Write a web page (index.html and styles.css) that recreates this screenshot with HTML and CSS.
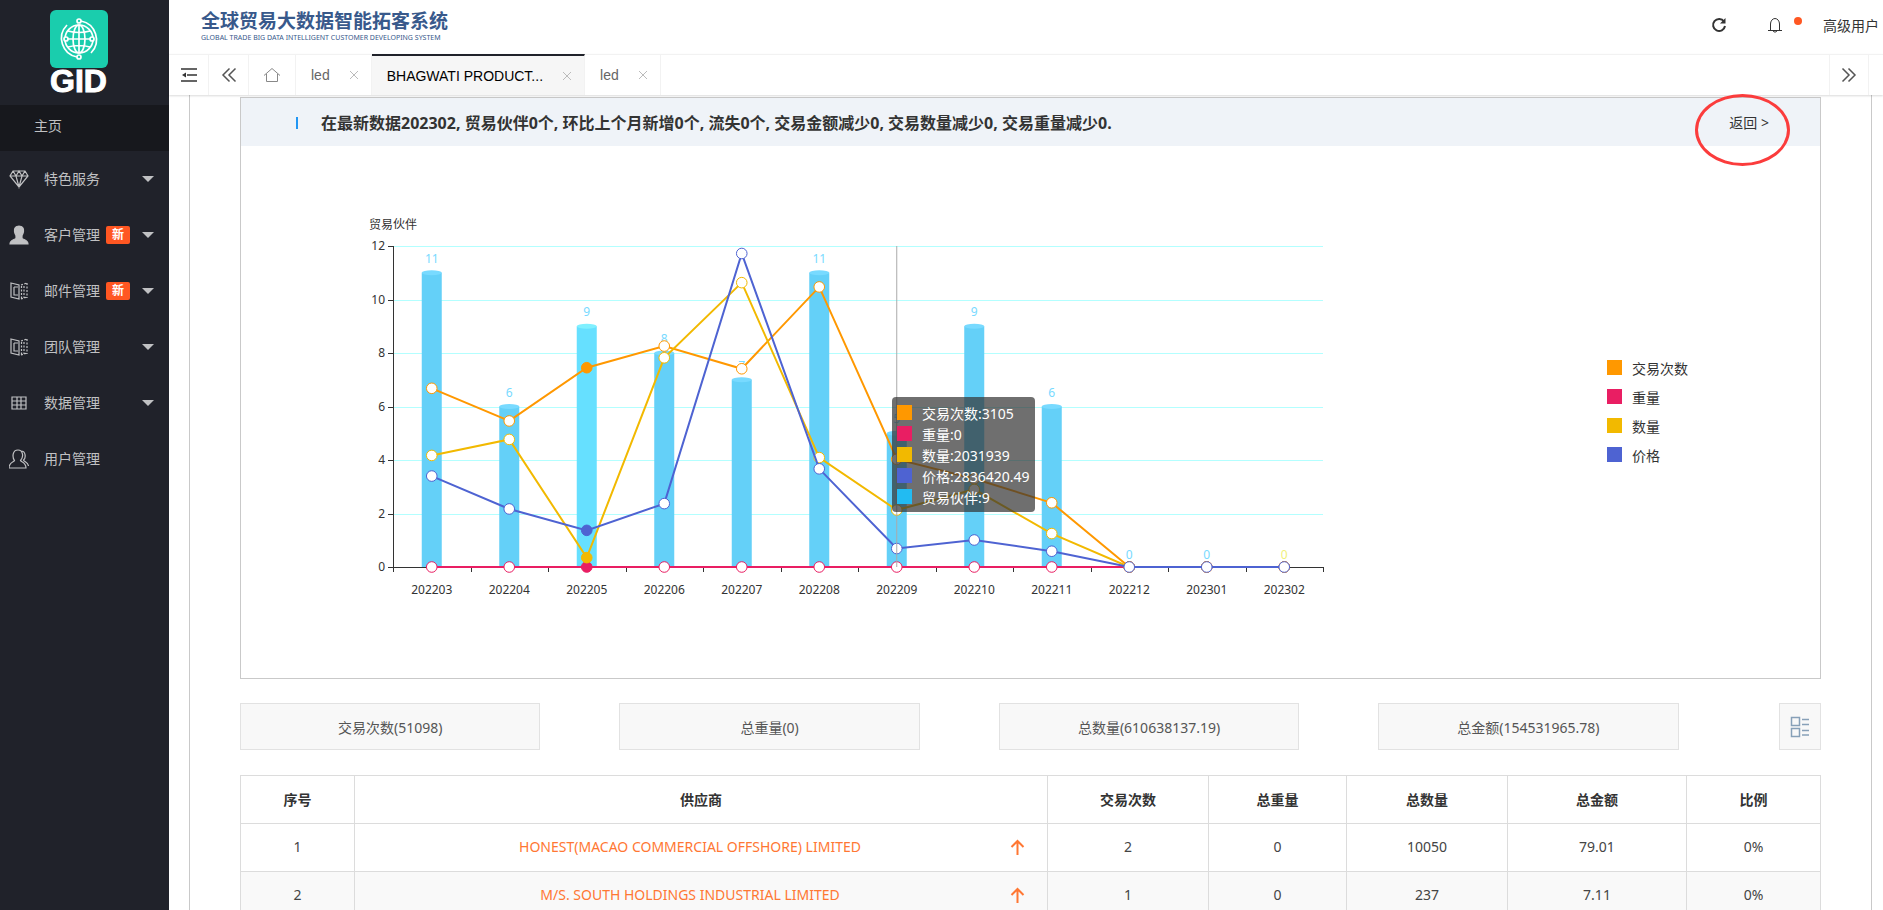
FILE: index.html
```
<!DOCTYPE html>
<html lang="zh-CN">
<head>
    <meta charset="UTF-8">
    <meta name="viewport" content="width=device-width, initial-scale=1.0">
    <title>全球贸易大数据智能拓客系统</title>
    <link rel="stylesheet" href="styles.css">
</head>
<body>
    <aside class="sidebar">
        <div class="logo">
            <svg class="logo-mark" viewBox="0 0 58 58" fill="none" stroke="#fff" stroke-width="1.700">
                <rect width="58" height="58" rx="6" fill="#1acdad" stroke="none"/>
                <circle cx="29" cy="29" r="14"/>
                <ellipse cx="29" cy="29" rx="6" ry="14"/>
                <path d="M29 15v28M15 29h28M18 21q11 3 22 0M18 37q11-3 22 0"/>
                <path d="M17 15a19 19 0 0 0 10 32M31 11a19 19 0 0 1 10 32"/>
                <g fill="#1acdad">
                    <circle cx="29" cy="11" r="2"/>
                    <circle cx="29" cy="47" r="2"/>
                    <circle cx="16" cy="29" r="2"/>
                    <circle cx="42" cy="29" r="2"/>
                </g>
            </svg>
            <div class="logo-text">GID</div>
        </div>
        <a href="#" class="nav-home">主页</a>
        <nav class="nav">
            <a href="#">
                <svg class="icon" viewBox="0 0 20 20"><path d="M4 2h12l3 5-9 11L1 7zM1 7h18M4 2l3 5 3 11 3-11 3-5M7 7l3-5 3 5"/></svg>
                <span>特色服务</span><i class="caret"></i>
            </a>
            <a href="#">
                <svg class="icon" viewBox="0 0 20 20"><path class="fill" d="M10 1c3 0 5 2 4.500 5.500-.2 2-1 3-1.500 4v3c2 1.500 6 1.500 6 5.500H1c0-4 4-4 6-5.500v-3c-.5-1-1.300-2-1.500-4C5 3 7 1 10 1z"/></svg>
                <span>客户管理</span><b class="badge">新</b><i class="caret"></i>
            </a>
            <a href="#">
                <svg class="icon" viewBox="0 0 20 20"><path d="M2 2l8 2v14l-8-2zM5 6h4M5 6v8h4"/><path stroke-dasharray="2 1.500" d="M12 4l6-2M18 2v15M12 18l6-2M12.500 5v13M15 5v12"/></svg>
                <span>邮件管理</span><b class="badge">新</b><i class="caret"></i>
            </a>
            <a href="#">
                <svg class="icon" viewBox="0 0 20 20"><path d="M2 2l8 2v14l-8-2zM5 6h4M5 6v8h4"/><path stroke-dasharray="2 1.500" d="M12 4l6-2M18 2v15M12 18l6-2M12.500 5v13M15 5v12"/></svg>
                <span>团队管理</span><i class="caret"></i>
            </a>
            <a href="#">
                <svg class="icon" viewBox="0 0 20 20"><path d="M3 4h14v12H3zM3 8h14M3 12h14M8 4v12M12 4v12"/></svg>
                <span>数据管理</span><i class="caret"></i>
            </a>
            <a href="#">
                <svg class="icon" viewBox="0 0 20 20"><path d="M9 1c5 0 6 7 2.500 10.500C12 13 17 13 17 19H0c0-6 5-6 5.500-7.500C3 8 3.500 1 9 1zM12 2c5 0 5 7 2.500 9 .5 2 4.500 2 5 6"/></svg>
                <span>用户管理</span>
            </a>
        </nav>
    </aside>

    <div class="main">
        <header class="header">
            <div class="brand">
                <div class="brand-cn">全球贸易大数据智能拓客系统</div>
                <div class="brand-en">GLOBAL TRADE BIG DATA INTELLIGENT CUSTOMER DEVELOPING SYSTEM</div>
            </div>
            <div class="tools">
                <button type="button" aria-label="刷新">
                    <svg width="16" height="16" viewBox="0 0 16 16" fill="none" stroke="#333" stroke-width="2"><path d="M13 4.500A6 6 0 1 0 14 9"/><path d="M14.500 1v5.500H9z" fill="#333" stroke="none"/></svg>
                </button>
                <button type="button" class="bell" aria-label="消息">
                    <svg width="16" height="16" viewBox="0 0 16 16" fill="none" stroke="#333"><path d="M3.500 13V7c0-3 2-5.500 4.500-5.500S12.500 4 12.500 7v6M1 13.500h14M6 14q2 2.500 4 0"/></svg>
                    <i class="dot"></i>
                </button>
                <a href="#">高级用户</a>
            </div>
        </header>

        <div class="tabs">
            <button type="button" class="tab-icon" aria-label="收起菜单">
                <svg width="16" height="14" viewBox="0 0 16 14" fill="none" stroke="#333" stroke-width="1.500"><path d="M0 1h16M6 7h10M0 13h16"/><path d="M1 7l4-2.500v5z" fill="#333" stroke="none"/></svg>
            </button>
            <button type="button" class="tab-icon" aria-label="向左">
                <svg width="16" height="16" viewBox="0 0 16 16" fill="none" stroke="#555" stroke-width="1.500"><path d="M8.500 1.500L2 8l6.500 6.500M14.500 1.500L8 8l6.500 6.500"/></svg>
            </button>
            <a href="#" class="tab-icon tab-home" aria-label="首页">
                <svg width="18" height="16" viewBox="0 0 18 16" fill="none" stroke="#888"><path d="M1 8.500L9 1.500l8 7M3.500 7v7.500h11V7"/></svg>
            </a>
            <div class="tab"><a href="#">led</a><button type="button" class="close" aria-label="关闭"></button></div>
            <div class="tab active"><a href="#">BHAGWATI PRODUCT...</a><button type="button" class="close" aria-label="关闭"></button></div>
            <div class="tab"><a href="#">led</a><button type="button" class="close" aria-label="关闭"></button></div>
            <button type="button" class="tab-icon tab-right" aria-label="向右">
                <svg width="16" height="16" viewBox="0 0 16 16" fill="none" stroke="#555" stroke-width="1.500"><path d="M1.500 1.500L8 8l-6.500 6.500M7.500 1.500L14 8l-6.500 6.500"/></svg>
            </button>
            <div class="tab-more"></div>
        </div>

        <div class="content">
            <section class="panel">
                <div class="panel-head">
                    <h2>在最新数据202302, 贸易伙伴0个, 环比上个月新增0个, 流失0个, 交易金额减少0, 交易数量减少0, 交易重量减少0.</h2>
                    <a href="#" class="back">返回 &gt;</a>
                </div>
                <div class="chart">
                    <div class="plot">
                        <svg id="plot"></svg>
                        <ul class="tooltip" id="tooltip">
                            <li><i class="swatch orange"></i>交易次数:3105</li>
                            <li><i class="swatch pink"></i>重量:0</li>
                            <li><i class="swatch yellow"></i>数量:2031939</li>
                            <li><i class="swatch blue"></i>价格:2836420.49</li>
                            <li><i class="swatch sky"></i>贸易伙伴:9</li>
                        </ul>
                    </div>
                    <ul class="legend">
                        <li><i class="swatch orange"></i>交易次数</li>
                        <li><i class="swatch pink"></i>重量</li>
                        <li><i class="swatch yellow"></i>数量</li>
                        <li><i class="swatch blue"></i>价格</li>
                    </ul>
                </div>
            </section>

            <div class="stats">
                <button type="button" class="stat">交易次数(51098)</button>
                <button type="button" class="stat">总重量(0)</button>
                <button type="button" class="stat">总数量(610638137.19)</button>
                <button type="button" class="stat">总金额(154531965.78)</button>
                <button type="button" class="view" aria-label="切换视图">
                    <svg width="20" height="22" viewBox="0 0 20 22" fill="none" stroke="#87a0b8" stroke-width="1.500"><rect x="1.500" y="1.500" width="8" height="8"/><rect x="1.500" y="12.500" width="8" height="8"/><path d="M12 3.500h7M12 8.500h7M12 14.500h7M12 19h7"/></svg>
                </button>
            </div>

            <table class="data">
                <colgroup>
                    <col class="c-no"><col><col class="c-mid"><col class="c-weight"><col class="c-mid"><col class="c-money"><col class="c-rate">
                </colgroup>
                <thead>
                    <tr>
                        <th>序号</th>
                        <th>供应商</th>
                        <th>交易次数</th>
                        <th>总重量</th>
                        <th>总数量</th>
                        <th>总金额</th>
                        <th>比例</th>
                    </tr>
                </thead>
                <tbody>
                    <tr>
                        <td>1</td>
                        <td>
                            <div class="supplier">
                                <a href="#">HONEST(MACAO COMMERCIAL OFFSHORE) LIMITED</a>
                                <svg width="15" height="16" viewBox="0 0 15 16" fill="none" stroke="#ff7733" stroke-width="2"><path d="M7.500 16V2M1.500 8l6-6 6 6"/></svg>
                            </div>
                        </td>
                        <td>2</td>
                        <td>0</td>
                        <td>10050</td>
                        <td>79.01</td>
                        <td>0%</td>
                    </tr>
                    <tr>
                        <td>2</td>
                        <td>
                            <div class="supplier">
                                <a href="#">M/S. SOUTH HOLDINGS INDUSTRIAL LIMITED</a>
                                <svg width="15" height="16" viewBox="0 0 15 16" fill="none" stroke="#ff7733" stroke-width="2"><path d="M7.500 16V2M1.500 8l6-6 6 6"/></svg>
                            </div>
                        </td>
                        <td>1</td>
                        <td>0</td>
                        <td>237</td>
                        <td>7.11</td>
                        <td>0%</td>
                    </tr>
                </tbody>
            </table>
        </div>
    </div>

    <script src="chart.js"></script>
</body>
</html>
```
FILE: styles.css
```
*,
*::before,
*::after {
    box-sizing: border-box;
}

body {
    display: flex;
    height: 100vh;
    margin: 0;
    overflow: hidden;
    font-family: "Noto Sans", "Noto Sans CJK SC", sans-serif;
    font-size: 14px;
    color: #333;
    background-color: #fff;
}

a {
    color: inherit;
    text-decoration: none;
}

button {
    padding: 0;
    border: none;
    background: none;
    font: inherit;
    color: inherit;
    cursor: pointer;
}

ul {
    margin: 0;
    padding: 0;
    list-style: none;
}

svg {
    display: block;
}

/* sidebar */
.sidebar {
    flex: 0 0 169px;
    background-color: #20222a;
    color: #c0c1c3;
}

.logo {
    height: 105px;
    padding: 10px 12px 0 0;
}

.logo-mark {
    width: 58px;
    height: 58px;
    margin: 0 auto;
}

.logo-text {
    line-height: 26px;
    text-align: center;
    font-family: "Liberation Sans", sans-serif;
    font-size: 32px;
    font-weight: bold;
    color: #fff;
    -webkit-text-stroke: 1px #fff;
}

.nav-home {
    display: block;
    height: 46px;
    padding-left: 34px;
    line-height: 42px;
    background-color: #17181d;
}

.nav a {
    display: flex;
    align-items: center;
    height: 56px;
    padding: 0 15px 0 9px;
}

.nav span {
    padding-bottom: 2px;
}

.icon {
    width: 20px;
    height: 20px;
    margin-right: 15px;
    fill: none;
    stroke: #c0c1c3;
    stroke-width: 1.2;
}

.icon .fill {
    fill: #c0c1c3;
}

.badge {
    width: 24px;
    height: 18px;
    margin-left: 6px;
    border-radius: 2px;
    line-height: 18px;
    text-align: center;
    font-size: 12px;
    color: #fff;
    background-color: #ff5722;
}

.caret {
    margin-left: auto;
    border: 6px solid transparent;
    border-top-color: #c0c1c3;
    border-bottom-width: 0;
}

/* header */
.main {
    display: flex;
    flex-direction: column;
    flex: 1;
    min-width: 0;
}

.header {
    display: flex;
    justify-content: space-between;
    flex: 0 0 54px;
    padding: 8px 4px 0 32px;
}

.brand {
    color: #38598b;
}

.brand-cn {
    line-height: 26px;
    font-size: 19px;
    font-weight: bold;
}

.brand-en {
    line-height: 8px;
    font-size: 7px;
}

.tools {
    display: flex;
    align-items: center;
    height: 34px;
}

.tools a {
    margin-left: 40px;
}

.bell {
    position: relative;
    margin-left: 40px;
}

.dot {
    position: absolute;
    top: 0;
    right: -19px;
    width: 8px;
    height: 8px;
    border-radius: 50%;
    background-color: #ff5722;
}

/* tabs */
.tabs {
    display: flex;
    flex: 0 0 41px;
    border-top: 1px solid #f2f2f2;
    box-shadow: 0 1px 2px rgba(0, 0, 0, 0.15);
    font-family: "Liberation Sans", sans-serif;
    color: #666;
    z-index: 1;
}

.tab-icon {
    display: flex;
    align-items: center;
    justify-content: center;
    flex: 0 0 40px;
    border-right: 1px solid #f2f2f2;
}

.tab-home {
    flex-basis: 47px;
}

.tab {
    display: flex;
    align-items: center;
    height: 40px;
    padding: 0 11px 0 15px;
    border-right: 1px solid #f2f2f2;
    white-space: nowrap;
}

.tab.active {
    margin-top: -1px;
    height: 41px;
    border-top: 2px solid #20222a;
    background-color: #f6f6f6;
    color: #000;
}

.close {
    width: 12px;
    height: 12px;
    margin-left: 18px;
    background:
        linear-gradient(45deg, transparent 44%, #bbb 44%, #bbb 56%, transparent 56%) center / 8px 8px no-repeat,
        linear-gradient(-45deg, transparent 44%, #bbb 44%, #bbb 56%, transparent 56%) center / 8px 8px no-repeat;
}

.tab-right {
    margin-left: auto;
    border-left: 1px solid #f2f2f2;
}

.tab-more {
    width: 14px;
}

/* content */
.content {
    flex: 1;
    min-height: 0;
    margin: 0 11px 0 20px;
    padding: 2px 50px 0;
    border: 1px solid #c9c9c9;
    border-width: 0 1px;
}

.panel {
    border: 1px solid #c9c9c9;
}

.panel-head {
    display: flex;
    align-items: center;
    justify-content: space-between;
    height: 48px;
    padding: 0 51px 0 55px;
    background-color: #eff3f8;
}

.panel-head h2 {
    margin: 0;
    font-size: 16px;
}

.panel-head h2::before {
    content: "";
    display: inline-block;
    width: 2px;
    height: 12px;
    margin-right: 23px;
    background-color: #2196f3;
}

.back {
    position: relative;
}

/* red ring drawn over the back link */
.back::after {
    content: "";
    position: absolute;
    top: -18px;
    left: -34px;
    width: 95px;
    height: 72px;
    border: 3px solid #fb3c3c;
    border-radius: 50%;
    z-index: 2;
}

.chart {
    display: flex;
    height: 532px;
    padding: 100px 0 0 152px;
}

.plot {
    position: relative;
    flex: 1;
    height: 321px;
    margin-right: 284px;
}

#plot {
    width: 100%;
    height: 100%;
    overflow: visible;
    font-size: 12px;
    fill: #333;
}

.swatch {
    flex: none;
    width: 15px;
    height: 15px;
    margin-right: 10px;
}

.orange { background-color: #ff9800; }
.pink { background-color: #e91e63; }
.yellow { background-color: #f2b900; }
.blue { background-color: #4e63d2; }
.sky { background-color: #22bbf2; }

.legend {
    width: 213px;
    padding-top: 107px;
}

.legend li,
.tooltip li {
    display: flex;
    align-items: center;
    height: 29px;
}

.tooltip {
    position: absolute;
    top: 151px;
    padding: 5px;
    border-radius: 4px;
    background-color: rgba(50, 50, 50, 0.7);
    color: #fff;
    white-space: nowrap;
}

.tooltip li {
    height: 21px;
}

.stats {
    display: flex;
    margin: 24px 0 25px;
}

.stat,
.view {
    height: 47px;
    border: 1px solid #e2e2e2;
    background-color: #f8f8f8;
    color: #555;
}

.stat {
    width: 19%;
    margin-right: 5%;
}

.view {
    width: 42px;
    margin-left: auto;
}

.view svg {
    margin: 0 auto;
}

.data {
    width: 100%;
    table-layout: fixed;
    border-collapse: collapse;
    text-align: center;
}

.data th,
.data td {
    height: 48px;
    padding: 0 15px 2px;
    border: 1px solid #dcdcdc;
}

.data td {
    color: #444;
}

.data tbody tr:nth-child(even) {
    background-color: #f9f9f9;
}

.c-no { width: 114px; }
.c-mid { width: 161px; }
.c-weight { width: 138px; }
.c-money { width: 179px; }
.c-rate { width: 134px; }

.supplier {
    display: flex;
    align-items: center;
    color: #ff7733;
}

.supplier a {
    flex: 1;
}

.supplier svg {
    margin-right: 7px;
}
```
FILE: chart.js
```
const months = ["202203", "202204", "202205", "202206", "202207", "202208",
    "202209", "202210", "202211", "202212", "202301", "202302"];
const partners = [11, 6, 9, 8, 7, 11, 5, 9, 6, 0, 0, 0];

const lines = [
    { color: "#ff9800", data: [6.68, 5.46, 7.45, 8.26, 7.41, 10.47, 4.03, 3.3, 2.4, 0, 0, 0] },
    { color: "#e91e63", data: [0, 0, 0, 0, 0, 0, 0, 0, 0, 0, 0, 0] },
    { color: "#f2b900", data: [4.17, 4.77, 0.35, 7.82, 10.63, 4.09, 2.13, 2.9, 1.25, 0, 0, 0] },
    { color: "#4e63d2", data: [3.4, 2.17, 1.37, 2.37, 11.72, 3.67, 0.69, 1.01, 0.59, 0, 0, 0] }
];

const active = 2;   // highlighted month
const pointer = 6;  // month under the axis pointer
const max = 12;

function draw() {
    const svg = document.getElementById("plot");
    const width = svg.clientWidth;
    const height = svg.clientHeight;
    const step = width / months.length;
    const x = i => step * (i + 0.5);
    const y = v => height - v * height / max;
    let out = "";

    // grid and y axis
    for (let v = 0; v <= max; v += 2) {
        const py = Math.round(y(v)) + 0.5;
        if (v > 0) {
            out += `<path d="M0 ${py}H${width}" stroke="#b3ffff"/>`;
        }
        out += `<path d="M-5 ${py}H0" stroke="#333"/>`;
        out += `<text x="-8" y="${py + 3}" text-anchor="end">${v}</text>`;
    }
    out += `<path d="M0.5 0V${height}M0 ${height + 0.5}H${width}" stroke="#333" fill="none"/>`;
    out += `<text x="0" y="-17" text-anchor="middle">贸易伙伴</text>`;

    // x axis ticks
    for (let i = 0; i <= months.length; i++) {
        out += `<path d="M${Math.round(i * step) + 0.5} ${height}v5" stroke="#333"/>`;
    }

    // bars
    months.forEach((month, i) => {
        const top = y(partners[i]);
        const body = i === active ? "#66e0ff" : "#64d0f8";
        const cap = i === active ? "#80f0ff" : "#78daff";
        if (partners[i] > 0) {
            out += `<rect x="${x(i) - 10}" y="${top}" width="20" height="${height - top}" fill="${body}"/>`;
            out += `<ellipse cx="${x(i)}" cy="${top}" rx="10" ry="2.5" fill="${cap}"/>`;
        }
        const label = i === months.length - 1 ? "#f0f07a" : "#78daff";
        out += `<text x="${x(i)}" y="${top - (partners[i] ? 10 : 8)}" text-anchor="middle" fill="${label}">${partners[i]}</text>`;
        out += `<text x="${x(i)}" y="${height + 27}" text-anchor="middle">${month}</text>`;
    });

    // lines with their markers
    lines.forEach(line => {
        const points = line.data.map((v, i) => `${x(i)},${y(v)}`).join(" ");
        out += `<polyline points="${points}" fill="none" stroke="${line.color}" stroke-width="2"/>`;
        line.data.forEach((v, i) => {
            const fill = i === active ? line.color : "#fff";
            out += `<circle cx="${x(i)}" cy="${y(v)}" r="5.3" fill="${fill}" stroke="${line.color}"/>`;
        });
    });

    out += `<path d="M${x(pointer)} 0V${height}" stroke="#aaa"/>`;
    svg.innerHTML = out;
    document.getElementById("tooltip").style.left = `${Math.round(x(pointer)) - 5}px`;
}

draw();
window.addEventListener("resize", draw);
```
